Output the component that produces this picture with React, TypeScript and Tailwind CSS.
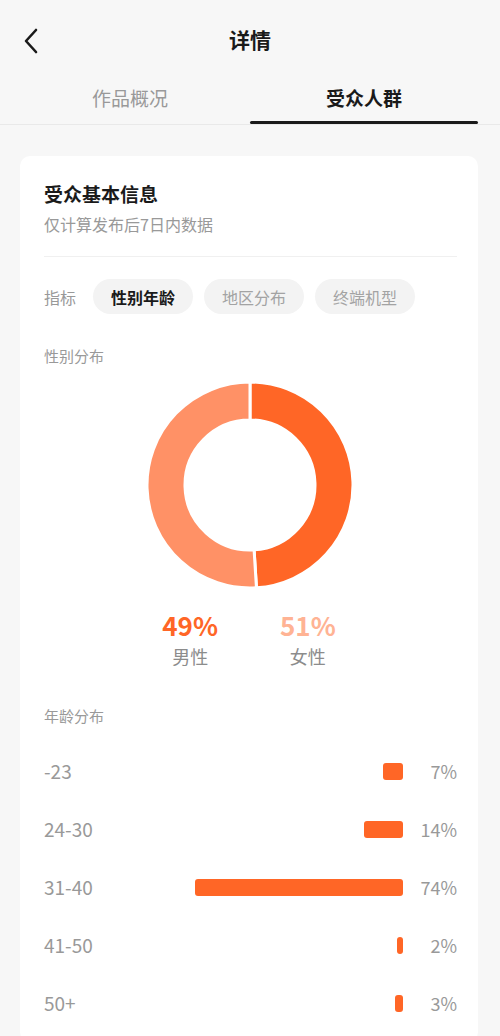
import React from "react";

const FONT = { fontFamily: '"Noto Sans CJK SC", "Noto Sans", sans-serif' };

const AGES = [
  { label: "-23", pct: 7 },
  { label: "24-30", pct: 14 },
  { label: "31-40", pct: 74 },
  { label: "41-50", pct: 2 },
  { label: "50+", pct: 3 },
];

const CHIPS = ["性别年龄", "地区分布", "终端机型"];

function sector(cx: number, cy: number, R: number, r: number, a0: number, a1: number) {
  const pt = (rad: number, deg: number) => {
    const t = ((deg - 90) * Math.PI) / 180;
    return `${cx + rad * Math.cos(t)} ${cy + rad * Math.sin(t)}`;
  };
  const large = a1 - a0 > 180 ? 1 : 0;
  return [
    `M ${pt(R, a0)}`,
    `A ${R} ${R} 0 ${large} 1 ${pt(R, a1)}`,
    `L ${pt(r, a1)}`,
    `A ${r} ${r} 0 ${large} 0 ${pt(r, a0)}`,
    "Z",
  ].join(" ");
}

function Donut() {
  const male = 49;
  const split = (male / 100) * 360;
  return (
    <svg width="210" height="210" viewBox="0 0 210 210">
      <path d={sector(105, 105, 103, 65, 0, split)} fill="#ff6626" stroke="#fff" strokeWidth={3} />
      <path d={sector(105, 105, 103, 65, split, 360)} fill="#ff9166" stroke="#fff" strokeWidth={3} />
    </svg>
  );
}

export default function App() {
  return (
    <div className="min-h-screen bg-[#f7f7f7] overflow-hidden" style={FONT}>
      {/* header */}
      <div className="relative h-[80px] flex items-center justify-center">
        <svg className="absolute left-[22px] top-[28px]" width="18" height="26" viewBox="0 0 18 26">
          <path d="M14 2 L4 13 L14 24" fill="none" stroke="#1a1a1a" strokeWidth={2.6} strokeLinecap="round" strokeLinejoin="round" />
        </svg>
        <span className="text-[21px] font-bold text-[#1a1a1a]">详情</span>
      </div>

      {/* tabs */}
      <div className="border-b border-[#e9e9e9]">
        <div className="flex px-[22px]">
          <div className="flex-1 flex flex-col items-center">
            <span className="text-[19px] leading-[28px] pt-[4px] mr-[12px] text-[#999]">作品概况</span>
            <div className="h-[12px]" />
          </div>
          <div className="flex-1 flex flex-col items-center">
            <span className="text-[19px] leading-[28px] pt-[4px] font-bold text-[#1a1a1a]">受众人群</span>
            <div className="h-[9px]" />
            <div className="w-full h-[3px] bg-[#1a1a1a] rounded-full" />
          </div>
        </div>
      </div>

      {/* card */}
      <div className="ml-[20px] mr-[22px] mt-[31px] bg-white rounded-[10px] pl-[24px] pr-[21px] pt-[24px] pb-[10px]">
        <div className="text-[19px] leading-[28px] font-bold text-[#1a1a1a]">受众基本信息</div>
        <div className="mt-[4px] text-[16px] leading-[24px] text-[#999]">仅计算发布后7日内数据</div>
        <div className="mt-[20px] h-px bg-[#f0f0f0]" />

        <div className="mt-[22px] flex items-center">
          <span className="text-[16px] text-[#999] mr-[17px]">指标</span>
          <div className="flex gap-[11px]">
            {CHIPS.map((c, i) => (
              <div
                key={c}
                className={`h-[35px] w-[100px] rounded-full bg-[#f3f3f3] flex items-center justify-center text-[16px] ${
                  i === 0 ? "font-bold text-[#1a1a1a]" : "text-[#a3a3a3]"
                }`}
              >
                {c}
              </div>
            ))}
          </div>
        </div>

        <div className="mt-[31px] text-[15px] leading-[22px] text-[#999]">性别分布</div>
        <div className="mt-[13px] flex justify-center pr-[1px]">
          <Donut />
        </div>

        <div className="mt-[19px] flex justify-center gap-[62px] pr-[3px]">
          <div className="flex flex-col items-center">
            <span className="text-[26px] leading-[32px] font-bold text-[#ff6626]">49%</span>
            <span className="mt-[2px] text-[18px] leading-[26px] text-[#8c8c8c]">男性</span>
          </div>
          <div className="flex flex-col items-center">
            <span className="text-[26px] leading-[32px] font-bold text-[#ffb394]">51%</span>
            <span className="mt-[2px] text-[18px] leading-[26px] text-[#8c8c8c]">女性</span>
          </div>
        </div>

        <div className="mt-[36px] text-[15px] leading-[22px] text-[#999]">年龄分布</div>
        <div className="mt-[15px]">
          {AGES.map((a) => (
            <div key={a.label} className="h-[58px] flex items-center">
              <span className="flex-1 text-[19px] text-[#999]">{a.label}</span>
              <div
                className="h-[17px] rounded-[3px] bg-[#ff6626]"
                style={{ width: `${(a.pct / 74) * 208}px` }}
              />
              <span className="w-[54px] text-right text-[18px] text-[#999]">{a.pct}%</span>
            </div>
          ))}
        </div>
      </div>
    </div>
  );
}
